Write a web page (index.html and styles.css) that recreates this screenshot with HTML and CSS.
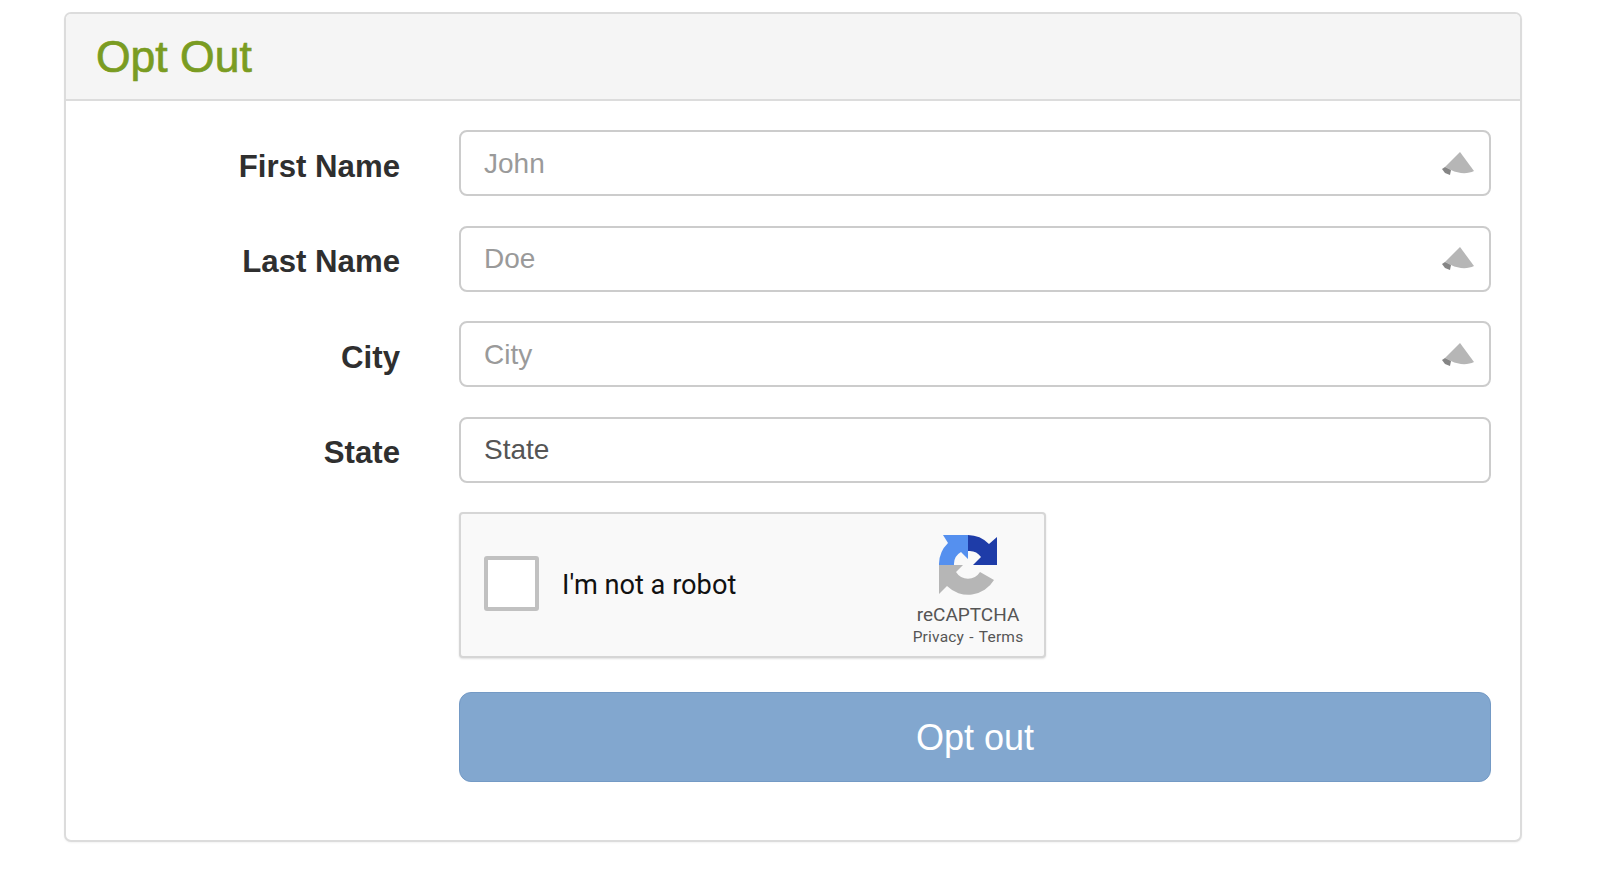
FILE: index.html
```html
<!DOCTYPE html>
<html lang="en">
<head>
<meta charset="utf-8">
<title>Opt Out</title>
<link rel="stylesheet" href="styles.css">
</head>
<body>
<section class="panel">
  <header class="panel-head"><h1 class="panel-title">Opt Out</h1></header>
  <form class="panel-body">
    <div class="row">
      <label class="row-label">First Name</label>
      <div class="field"><span class="placeholder">John</span>
        <svg class="cone" viewBox="0 0 32 24"><path d="M3 15 18 0 32 19C26 22 17 22 9 18Z" fill="#b6b6b6"/><path d="M0 17 3 15 9 18 8 23 3 21Z" fill="#858585"/></svg>
      </div>
    </div>
    <div class="row">
      <label class="row-label">Last Name</label>
      <div class="field"><span class="placeholder">Doe</span>
        <svg class="cone" viewBox="0 0 32 24"><path d="M3 15 18 0 32 19C26 22 17 22 9 18Z" fill="#b6b6b6"/><path d="M0 17 3 15 9 18 8 23 3 21Z" fill="#858585"/></svg>
      </div>
    </div>
    <div class="row">
      <label class="row-label">City</label>
      <div class="field"><span class="placeholder">City</span>
        <svg class="cone" viewBox="0 0 32 24"><path d="M3 15 18 0 32 19C26 22 17 22 9 18Z" fill="#b6b6b6"/><path d="M0 17 3 15 9 18 8 23 3 21Z" fill="#858585"/></svg>
      </div>
    </div>
    <div class="row">
      <label class="row-label">State</label>
      <div class="field"><span class="value">State</span></div>
    </div>
    <div class="captcha-row">
      <div class="captcha">
        <span class="check"></span>
        <span class="robot">I'm not a robot</span>
        <div class="brand">
          <svg class="logo" viewBox="0 0 58 60">
            <path d="M0 30H24L17 37A14 14 0 0 0 41 37L55 45A30 30 0 0 1 8 51L0 59Z" fill="#b6b6b6"/>
            <path d="M0 30A30 30 0 0 1 9 8L4 0H29V24L22 17A14 14 0 0 0 15 30Z" fill="#5590ef"/>
            <path d="M29 0A30 30 0 0 1 50 9L58 2V30H34L42 22A14 14 0 0 0 29 16Z" fill="#1e3ca8"/>
          </svg>
          <span class="brand-name">reCAPTCHA</span>
          <span class="brand-links">Privacy - Terms</span>
        </div>
      </div>
    </div>
    <button class="submit" type="button">Opt out</button>
  </form>
</section>
</body>
</html>
```

FILE: styles.css
```css
* { box-sizing: border-box; }
html, body { margin: 0; height: 100%; background: #fff; }
body { padding: 12px 78px 0 64px; font-family: "Liberation Sans", Arial, sans-serif; overflow: hidden; }
.panel { height: 830px; border: 2px solid #dcdcdc; border-radius: 7px; box-shadow: 0 1px 2px rgba(0,0,0,.05); background: #fff; }
.panel-head { height: 87px; background: #f5f5f5; border-bottom: 2px solid #dcdcdc; border-radius: 5px 5px 0 0; padding: 2px 0 0 30px; display: flex; align-items: center; }
.panel-title { margin: 0; font-size: 44.5px; font-weight: 400; color: #7a9c22; line-height: 1; -webkit-text-stroke: .7px #7a9c22; }
.panel-body { padding: 29px 29px 0 0; display: flex; flex-direction: column; gap: 29.5px; }
.row { display: flex; align-items: center; height: 66px; }
.row-label { width: 334px; flex: none; text-align: right; font-size: 31.2px; font-weight: 700; color: #2f2f2f; padding-top: 7px; }
.field { margin-left: 59px; flex: 1; height: 66px; border: 2px solid #cccccc; border-radius: 8px; display: flex; align-items: center; justify-content: space-between; padding: 1px 15px 0 23px; font-size: 28px; }
.placeholder { color: #9a9a9a; }
.value { color: #555; }
.cone { width: 32px; height: 24px; }
.captcha-row { margin-left: 393px; }
.captcha { width: 587px; height: 146px; background: #f9f9f9; border: 2px solid #d6d6d6; border-radius: 4px; box-shadow: 0 1px 2px rgba(0,0,0,.12); display: flex; align-items: center; padding: 0 21px 0 23px; }
.check { width: 55px; height: 55px; flex: none; margin-bottom: 4px; background: #fff; border: 4px solid #c1c1c1; border-radius: 3px; }
.robot { margin-left: 23px; flex: 1; font-family: Roboto, sans-serif; font-size: 27.2px; color: #111; }
.brand { width: 110px; align-self: flex-start; display: flex; flex-direction: column; align-items: center; color: #555; font-family: Roboto, sans-serif; padding-top: 21px; }
.logo { width: 58px; height: 60px; }
.brand-name { font-size: 19px; line-height: 22px; margin-top: 9px; white-space: nowrap; }
.brand-links { font-size: 15.5px; line-height: 18px; margin-top: 2px; letter-spacing: .2px; word-spacing: 1.2px; white-space: nowrap; }
.submit { margin: 4.5px 0 0 393px; width: calc(100% - 393px); height: 90px; padding-top: 2px; background: #82a7cf; border: 1px solid #749ac5; border-radius: 12px; color: #fff; font-family: "Liberation Sans", Arial, sans-serif; font-size: 36px; }
```
